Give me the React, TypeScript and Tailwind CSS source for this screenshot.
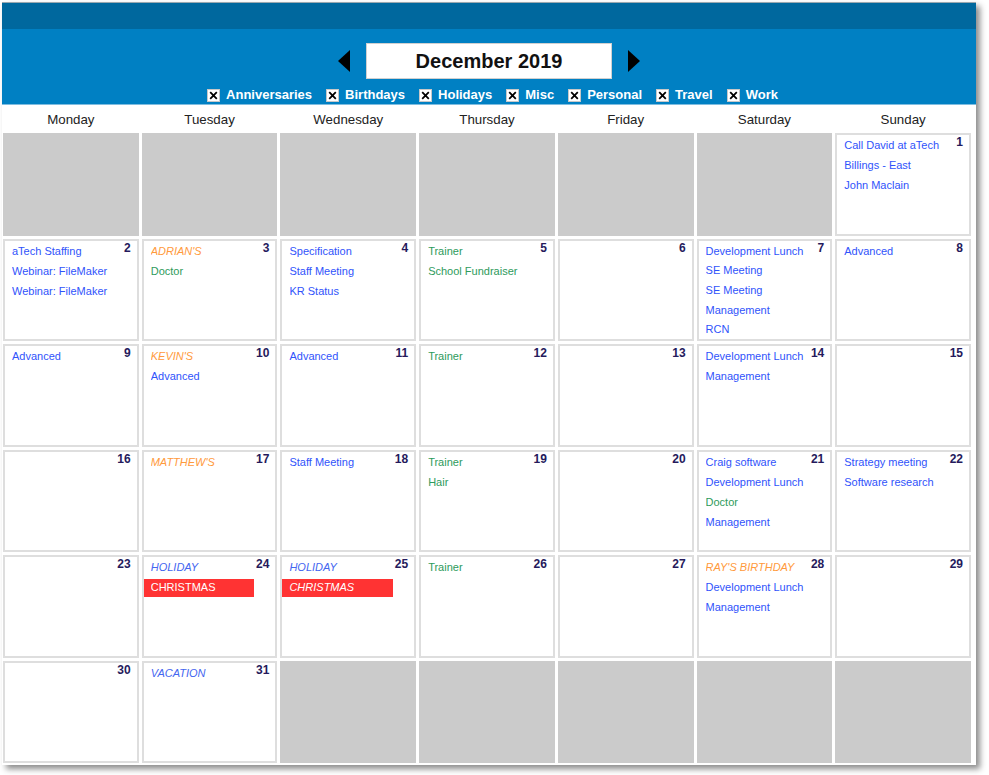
import React from "react";

type Kind = "blue" | "green" | "orange" | "holiday" | "red" | "redItalic";
type Ev = { t: string; k: Kind };
type Cell = { d?: number; ev?: Ev[] };

const b = (t: string): Ev => ({ t, k: "blue" });
const g = (t: string): Ev => ({ t, k: "green" });
const o = (t: string): Ev => ({ t, k: "orange" });
const h = (t: string): Ev => ({ t, k: "holiday" });

const cells: Cell[] = [
  {}, {}, {}, {}, {}, {},
  { d: 1, ev: [b("Call David at aTech"), b("Billings - East"), b("John Maclain")] },
  { d: 2, ev: [b("aTech Staffing"), b("Webinar: FileMaker"), b("Webinar: FileMaker")] },
  { d: 3, ev: [o("ADRIAN'S"), g("Doctor")] },
  { d: 4, ev: [b("Specification"), b("Staff Meeting"), b("KR Status")] },
  { d: 5, ev: [g("Trainer"), g("School Fundraiser")] },
  { d: 6 },
  { d: 7, ev: [b("Development Lunch"), b("SE Meeting"), b("SE Meeting"), b("Management"), b("RCN")] },
  { d: 8, ev: [b("Advanced")] },
  { d: 9, ev: [b("Advanced")] },
  { d: 10, ev: [o("KEVIN'S"), b("Advanced")] },
  { d: 11, ev: [b("Advanced")] },
  { d: 12, ev: [g("Trainer")] },
  { d: 13 },
  { d: 14, ev: [b("Development Lunch"), b("Management")] },
  { d: 15 },
  { d: 16 },
  { d: 17, ev: [o("MATTHEW'S")] },
  { d: 18, ev: [b("Staff Meeting")] },
  { d: 19, ev: [g("Trainer"), g("Hair")] },
  { d: 20 },
  { d: 21, ev: [b("Craig software"), b("Development Lunch"), g("Doctor"), b("Management")] },
  { d: 22, ev: [b("Strategy meeting"), b("Software research")] },
  { d: 23 },
  { d: 24, ev: [h("HOLIDAY"), { t: "CHRISTMAS", k: "red" }] },
  { d: 25, ev: [h("HOLIDAY"), { t: "CHRISTMAS", k: "redItalic" }] },
  { d: 26, ev: [g("Trainer")] },
  { d: 27 },
  { d: 28, ev: [o("RAY'S BIRTHDAY"), b("Development Lunch"), b("Management")] },
  { d: 29 },
  { d: 30 },
  { d: 31, ev: [h("VACATION")] },
  {}, {}, {}, {}, {},
];

const days = ["Monday", "Tuesday", "Wednesday", "Thursday", "Friday", "Saturday", "Sunday"];
const cats = ["Anniversaries", "Birthdays", "Holidays", "Misc", "Personal", "Travel", "Work"];

function EventRow({ e }: { e: Ev }) {
  if (e.k === "red" || e.k === "redItalic") {
    return (
      <div className="h-[20px] pt-[2px]">
        <div className={"h-[18px] bg-[#ff3333] pl-[7px] pt-[2px] text-white " + (e.k === "redItalic" ? "italic" : "")}>
          <div className="h-[12px] overflow-hidden leading-[13px] whitespace-nowrap">{e.t}</div>
        </div>
      </div>
    );
  }
  const cls =
    e.k === "blue"
      ? "text-[#3053fb]"
      : e.k === "green"
      ? "text-[#2e9b5c]"
      : e.k === "orange"
      ? "text-[#ff9a3c] italic"
      : "text-[#4466f0] italic";
  return (
    <div className="h-[20px] pt-[4px] pl-[7px]">
      <div className={"h-[12px] overflow-hidden leading-[13px] whitespace-nowrap " + cls}>{e.t}</div>
    </div>
  );
}

function DayCell({ c }: { c: Cell }) {
  if (c.d === undefined) {
    return <div className="bg-[#cbcbcb]" />;
  }
  return (
    <div className="flex border-2 border-[#dedede] bg-white min-w-0 overflow-hidden">
      <div className="flex-1 min-w-0 flex flex-col">
        {(c.ev || []).map((e, i) => (
          <EventRow key={i} e={e} />
        ))}
      </div>
      <div className="shrink-0 pr-[6px] pl-[2px] pt-[1px] text-[12px] font-bold leading-[12px] text-[#251a5c]">
        {c.d}
      </div>
    </div>
  );
}

function CheckBox() {
  return (
    <svg width="13" height="13" viewBox="0 0 13 13" className="shrink-0">
      <rect x="0.5" y="0.5" width="12" height="12" fill="#ffffff" stroke="#c8c8c8" />
      <path d="M3.2 3.2 L9.8 9.8 M9.8 3.2 L3.2 9.8" stroke="#000" strokeWidth="1.8" />
    </svg>
  );
}

export default function App() {
  return (
    <div className="w-[989px] h-[775px] bg-white pl-[2px] pt-[2px]" style={{ fontFamily: '"Liberation Sans", Arial, sans-serif' }}>
      <div className="w-[974px] h-[763px] flex flex-col bg-white border-t border-[#9aa8b0] shadow-[4px_4px_6px_rgba(0,0,0,0.45)]">
        <div className="h-[26px] bg-[#00689e]" />
        <div className="h-[76px] bg-[#0080c3] flex flex-col items-center border-b border-[#7fbde0]">
          <div className="mt-[14px] flex items-center">
            <svg width="12" height="22" viewBox="0 0 12 22" className="mr-[16px]">
              <path d="M12 0 L0 11 L12 22 Z" fill="#000" />
            </svg>
            <div className="w-[246px] h-[36px] bg-white border border-[#d0d0d0] flex items-center justify-center text-[20px] font-bold text-[#111]">
              December 2019
            </div>
            <svg width="12" height="22" viewBox="0 0 12 22" className="ml-[16px]">
              <path d="M0 0 L12 11 L0 22 Z" fill="#000" />
            </svg>
          </div>
          <div className="mt-[8px] ml-[7px] flex items-center gap-[14px]">
            {cats.map((c) => (
              <div key={c} className="flex items-center gap-[6px]">
                <CheckBox />
                <span className="text-[13px] font-bold text-white leading-[16px]">{c}</span>
              </div>
            ))}
          </div>
        </div>
        <div className="h-[28px] grid grid-cols-7 gap-[3px] pl-[1px] pr-[5px]">
          {days.map((d) => (
            <div key={d} className="flex items-center justify-center pt-[2px] text-[13.3px] text-[#222]">
              {d}
            </div>
          ))}
        </div>
        <div className="h-[630px] grid grid-cols-7 grid-rows-6 gap-[3px] pl-[1px] pr-[5px] text-[11px]">
          {cells.map((c, i) => (
            <DayCell key={i} c={c} />
          ))}
        </div>
      </div>
    </div>
  );
}
